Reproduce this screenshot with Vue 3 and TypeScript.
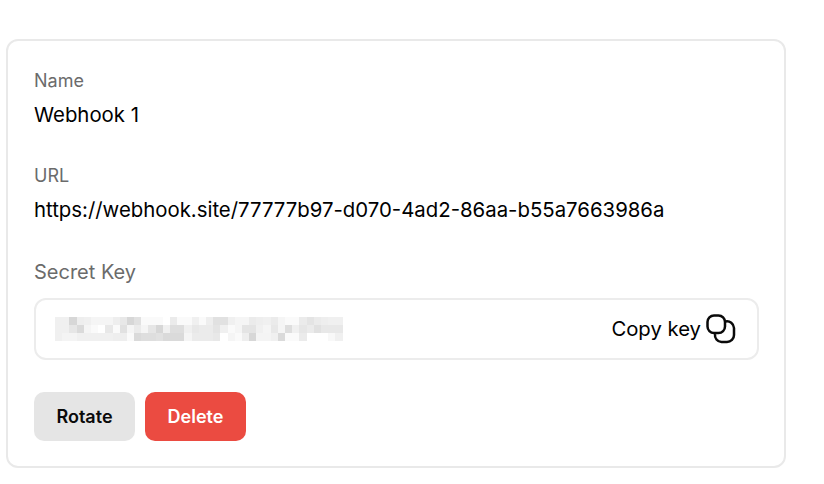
<script setup lang="ts">
const rows: number[][] = [
  [240,240,215,238,240,245,245,245,238,232,215,225,250,250,250,255,235,250,250,240,250,238,225,225,240,245,245,235,238,240,235,245,250,250,235,228,235,238,240,240],
  [240,240,230,218,245,250,255,232,250,225,245,235,245,230,215,240,222,222,240,232,235,235,228,240,250,245,228,228,240,245,232,245,222,240,230,235,225,232,232,232],
  [240,244,244,240,240,240,240,240,238,238,250,218,222,222,225,218,218,218,245,235,235,235,232,255,245,250,238,215,244,244,240,218,250,250,235,255,255,255,248,240],
];
const cellStyle = (v: number) => ({ background: `rgb(${v},${v},${v})` });
</script>

<template>
  <main class="page">
    <section class="card">
      <div class="field">
        <span class="label">Name</span>
        <span class="value">Webhook 1</span>
      </div>
      <div class="field">
        <span class="label">URL</span>
        <span class="value">https://webhook.site/77777b97-d070-4ad2-86aa-b55a7663986a</span>
      </div>
      <div class="secret">
        <span class="secret-label">Secret Key</span>
        <div class="key-box">
          <div class="mosaic" aria-hidden="true">
            <template v-for="(row, r) in rows" :key="r">
              <i v-for="(v, c) in row" :key="c" :style="cellStyle(v)"></i>
            </template>
          </div>
          <button class="copy" type="button">
            <span class="copy-text">Copy key</span>
            <svg width="30" height="30" viewBox="0 0 30 30" fill="none" stroke="#0a0a0a" stroke-width="2.5">
              <rect x="1.5" y="1.5" width="17.5" height="17.5" rx="6.5" />
              <path d="M19.5 7.5 A7 7 0 0 1 28 14 V21 A7 7 0 0 1 21 28 H15.5 A7 7 0 0 1 9 20" />
            </svg>
          </button>
        </div>
      </div>
      <div class="actions">
        <button class="btn rotate" type="button">Rotate</button>
        <button class="btn delete" type="button">Delete</button>
      </div>
    </section>
  </main>
</template>

<style scoped>
.page {
  box-sizing: border-box;
  width: 824px;
  height: 484px;
  padding: 39px 0 0 6px;
  background: #fff;
  font-family: Inter, "Liberation Sans", sans-serif;
}
.card {
  box-sizing: border-box;
  width: 780px;
  height: 429px;
  padding: 30px 25px 0 26px;
  border: 2px solid #e9e9e9;
  border-radius: 12px;
  display: flex;
  flex-direction: column;
}
.field {
  display: flex;
  flex-direction: column;
  gap: 12px;
  margin-bottom: 39px;
}
.label {
  font-size: 18px;
  line-height: 20px;
  color: #6b6b6b;
}
.value {
  font-size: 20.36px;
  line-height: 24px;
  color: #000;
}
.secret {
  display: flex;
  flex-direction: column;
  gap: 14px;
  margin-top: -1px;
}
.secret-label {
  font-size: 20px;
  line-height: 24px;
  color: #6b6b6b;
}
.key-box {
  box-sizing: border-box;
  height: 62px;
  padding: 0 21px 0 19px;
  border: 2px solid #ececec;
  border-radius: 12px;
  display: flex;
  align-items: center;
  justify-content: space-between;
}
.mosaic {
  display: grid;
  grid-template-columns: repeat(40, 7.2px);
  grid-auto-rows: 8px;
}
.mosaic i {
  display: block;
}
.copy {
  display: flex;
  align-items: center;
  gap: 5px;
  padding: 0;
  border: 0;
  background: none;
  font: inherit;
  font-size: 20.3px;
  color: #000;
}
.copy-text {
  margin-bottom: 2px;
}
.actions {
  display: flex;
  gap: 10px;
  margin-top: 32px;
}
.btn {
  width: 101px;
  height: 49px;
  border: 0;
  border-radius: 10px;
  font: inherit;
  font-size: 18px;
  font-weight: 600;
}
.rotate {
  background: #e5e5e5;
  color: #0a0a0a;
}
.delete {
  background: #eb4b41;
  color: #fff;
}
</style>
